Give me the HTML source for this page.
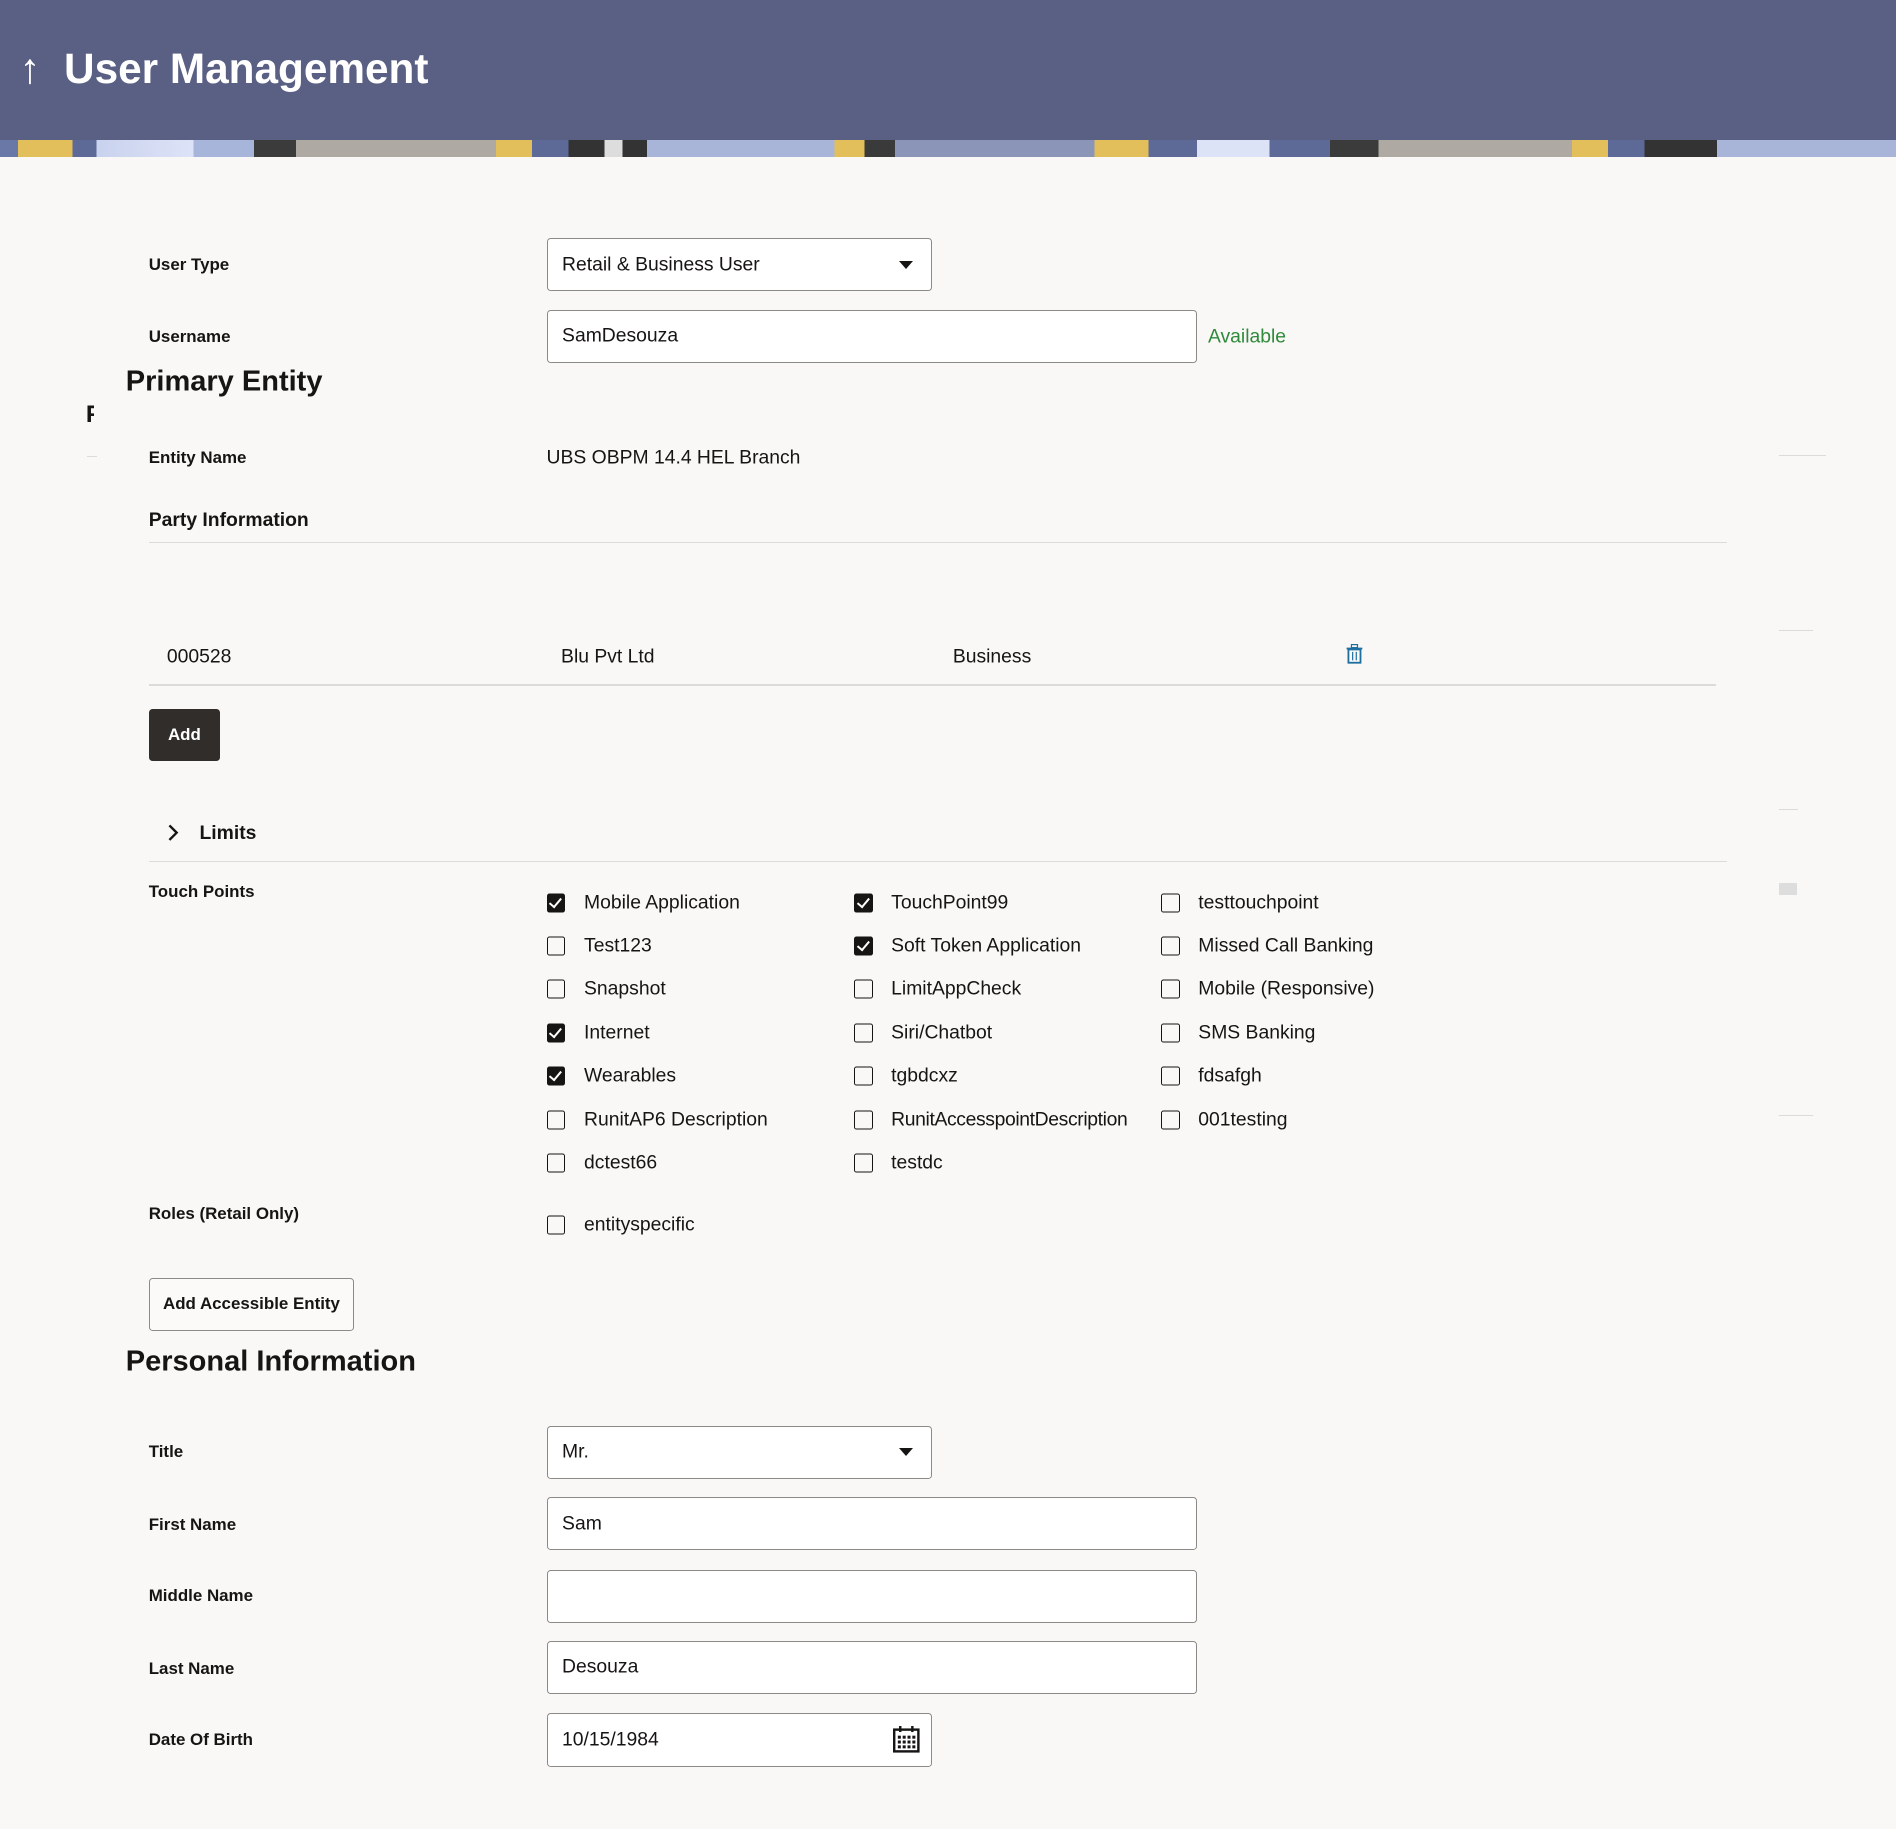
<!DOCTYPE html>
<html><head><meta charset="utf-8">
<style>
html,body{margin:0;padding:0;background:#f9f8f6;}
body{width:1896px;height:1829px;overflow:hidden;}
#w{zoom:1.20918;width:1568px;height:1513px;position:relative;font-family:"Liberation Sans",sans-serif;color:#161513;background:#f9f8f6;}
.a{position:absolute;}
.hdr{left:0;top:0;width:1568px;height:116px;background:#5a6084;}
.strip{left:0;top:116px;width:1568px;height:14px;
background:linear-gradient(90deg,#6a78a8 0,#6a78a8 15px,#e3bf5c 15px,#e3bf5c 60px,#5d6a98 60px,#5d6a98 80px,#c9d2ee 80px,#dde3f7 160px,#a8b5da 160px,#a8b5da 210px,#3b3b3b 210px,#3b3b3b 245px,#aeaaa3 245px,#aeaaa3 410px,#e3bf5c 410px,#e3bf5c 440px,#5d6a98 440px,#5d6a98 470px,#333 470px,#333 500px,#ddd 500px,#ddd 515px,#333 515px,#333 535px,#a9b5d8 535px,#a9b5d8 690px,#e3bf5c 690px,#e3bf5c 715px,#3a3a3a 715px,#3a3a3a 740px,#8b95b8 740px,#8b95b8 905px,#e3bf5c 905px,#e3bf5c 950px,#5d6a98 950px,#5d6a98 990px,#dde3f7 990px,#dde3f7 1050px,#5d6a98 1050px,#5d6a98 1100px,#3b3b3b 1100px,#3b3b3b 1140px,#aeaaa3 1140px,#aeaaa3 1300px,#e3bf5c 1300px,#e3bf5c 1330px,#5d6a98 1330px,#5d6a98 1360px,#333 1360px,#333 1420px,#a9b5d8 1420px,#a9b5d8 1568px);}
.title{left:16px;top:37px;color:#fff;font-size:35px;font-weight:bold;white-space:nowrap;}
.lbl{left:123px;font-size:14px;font-weight:bold;color:#161513;transform:translateY(-50%);}
.val{font-size:16px;transform:translateY(-50%);white-space:nowrap;}
.box{border:1px solid #8c8a87;border-radius:3px;background:#fff;box-sizing:border-box;}
.box span{position:absolute;left:12px;top:50%;transform:translateY(-50%);font-size:16px;}
.caret{position:absolute;right:15px;top:18px;width:0;height:0;border-left:6px solid transparent;border-right:6px solid transparent;border-top:7px solid #161513;}
.h2{left:104px;font-size:24px;font-weight:bold;transform:translateY(-50%);}
.line{height:1px;background:#dcdbd8;}
.cb{width:14px;height:14px;border:1.5px solid #161513;border-radius:2px;box-sizing:content-box;transform:translateY(-50%);}
.cb.on{background:#161513;}
.cb.on::after{content:"";position:absolute;left:4px;top:1px;width:4px;height:8px;border:solid #fff;border-width:0 2px 2px 0;transform:rotate(40deg);}
.ct{font-size:16px;transform:translateY(-50%);white-space:nowrap;}
</style></head><body><div id="w">
<div class="a hdr"></div>
<div class="a strip"></div>
<div class="a title">↑&nbsp;&nbsp;User Management</div>

<div class="a lbl" style="top:219px">User Type</div>
<div class="a box" style="left:452px;top:197px;width:319px;height:44px"><span>Retail &amp; Business User</span><div class="caret"></div></div>
<div class="a lbl" style="top:279px">Username</div>
<div class="a box" style="left:452px;top:256px;width:538px;height:44px"><span>SamDesouza</span></div>
<div class="a val" style="left:999px;top:279px;color:#2f8a3b">Available</div>

<div class="a h2" style="top:316px">Primary Entity</div>
<div class="a" style="left:71px;top:333px;width:7px;height:20px;overflow:hidden;font-size:20px;font-weight:bold;line-height:20px">F</div>
<div class="a line" style="left:72px;top:377px;width:8px"></div>
<div class="a line" style="left:1471px;top:376px;width:39px"></div>
<div class="a line" style="left:1471px;top:521px;width:28px"></div>
<div class="a line" style="left:1471px;top:669px;width:16px"></div>
<div class="a" style="left:1471px;top:730px;width:15px;height:10px;background:#ddd"></div>
<div class="a line" style="left:1471px;top:922px;width:28px"></div>

<div class="a lbl" style="top:379px">Entity Name</div>
<div class="a val" style="left:452px;top:379px">UBS OBPM 14.4 HEL Branch</div>
<div class="a" style="left:123px;top:421px;font-size:16px;font-weight:bold">Party Information</div>
<div class="a line" style="left:123px;top:448px;width:1305px"></div>
<div class="a val" style="left:138px;top:543px">000528</div>
<div class="a val" style="left:464px;top:543px">Blu Pvt Ltd</div>
<div class="a val" style="left:788px;top:543px">Business</div>
<svg class="a" style="left:1113px;top:533px" width="14" height="16" viewBox="0 0 14 16"><rect x="4.5" y="0.5" width="5" height="2.5" fill="none" stroke="#1d6fa0"/><rect x="0.5" y="3" width="13" height="1.5" fill="#1d6fa0"/><rect x="2" y="4.5" width="10" height="11" fill="none" stroke="#1d6fa0" stroke-width="1.5"/><line x1="5.5" y1="6.5" x2="5.5" y2="13.5" stroke="#1d6fa0"/><line x1="8.5" y1="6.5" x2="8.5" y2="13.5" stroke="#1d6fa0"/></svg>
<div class="a line" style="left:123px;top:566px;width:1296px"></div>
<div class="a" style="left:123px;top:586px;width:59px;height:43px;background:#312d2a;border-radius:3px;color:#fff;font-size:14px;font-weight:bold;line-height:43px;text-align:center">Add</div>

<svg class="a" style="left:138px;top:681px" width="10" height="16" viewBox="0 0 10 16"><path d="M2 2l6 6-6 6" fill="none" stroke="#161513" stroke-width="2"/></svg>
<div class="a" style="left:165px;top:680px;font-size:16px;font-weight:bold">Limits</div>
<div class="a line" style="left:123px;top:712px;width:1305px"></div>

<div class="a lbl" style="top:738px">Touch Points</div>

<div class="a cb on" style="left:452px;top:747px"></div><div class="a ct" style="left:483px;top:747px">Mobile Application</div>
<div class="a cb on" style="left:706px;top:747px"></div><div class="a ct" style="left:737px;top:747px">TouchPoint99</div>
<div class="a cb" style="left:960px;top:747px"></div><div class="a ct" style="left:991px;top:747px">testtouchpoint</div>

<div class="a cb" style="left:452px;top:782px"></div><div class="a ct" style="left:483px;top:782px">Test123</div>
<div class="a cb on" style="left:706px;top:782px"></div><div class="a ct" style="left:737px;top:782px">Soft Token Application</div>
<div class="a cb" style="left:960px;top:782px"></div><div class="a ct" style="left:991px;top:782px">Missed Call Banking</div>

<div class="a cb" style="left:452px;top:818px"></div><div class="a ct" style="left:483px;top:818px">Snapshot</div>
<div class="a cb" style="left:706px;top:818px"></div><div class="a ct" style="left:737px;top:818px">LimitAppCheck</div>
<div class="a cb" style="left:960px;top:818px"></div><div class="a ct" style="left:991px;top:818px">Mobile (Responsive)</div>

<div class="a cb on" style="left:452px;top:854px"></div><div class="a ct" style="left:483px;top:854px">Internet</div>
<div class="a cb" style="left:706px;top:854px"></div><div class="a ct" style="left:737px;top:854px">Siri/Chatbot</div>
<div class="a cb" style="left:960px;top:854px"></div><div class="a ct" style="left:991px;top:854px">SMS Banking</div>

<div class="a cb on" style="left:452px;top:890px"></div><div class="a ct" style="left:483px;top:890px">Wearables</div>
<div class="a cb" style="left:706px;top:890px"></div><div class="a ct" style="left:737px;top:890px">tgbdcxz</div>
<div class="a cb" style="left:960px;top:890px"></div><div class="a ct" style="left:991px;top:890px">fdsafgh</div>

<div class="a cb" style="left:452px;top:926px"></div><div class="a ct" style="left:483px;top:926px">RunitAP6 Description</div>
<div class="a cb" style="left:706px;top:926px"></div><div class="a ct" style="left:737px;top:926px;letter-spacing:-0.3px">RunitAccesspointDescription</div>
<div class="a cb" style="left:960px;top:926px"></div><div class="a ct" style="left:991px;top:926px">001testing</div>

<div class="a cb" style="left:452px;top:962px"></div><div class="a ct" style="left:483px;top:962px">dctest66</div>
<div class="a cb" style="left:706px;top:962px"></div><div class="a ct" style="left:737px;top:962px">testdc</div>

<div class="a lbl" style="top:1004px">Roles (Retail Only)</div>
<div class="a cb" style="left:452px;top:1013px"></div><div class="a ct" style="left:483px;top:1013px">entityspecific</div>

<div class="a" style="left:123px;top:1057px;width:170px;height:44px;border:1px solid #8c8a87;border-radius:3px;box-sizing:border-box;font-size:14px;font-weight:bold;line-height:42px;text-align:center;background:#fbfaf8">Add Accessible Entity</div>

<div class="a h2" style="top:1126px">Personal Information</div>

<div class="a lbl" style="top:1201px">Title</div>
<div class="a box" style="left:452px;top:1179px;width:319px;height:44px"><span>Mr.</span><div class="caret"></div></div>
<div class="a lbl" style="top:1261px">First Name</div>
<div class="a box" style="left:452px;top:1238px;width:538px;height:44px"><span>Sam</span></div>
<div class="a lbl" style="top:1320px">Middle Name</div>
<div class="a box" style="left:452px;top:1298px;width:538px;height:44px"></div>
<div class="a lbl" style="top:1380px">Last Name</div>
<div class="a box" style="left:452px;top:1357px;width:538px;height:44px"><span>Desouza</span></div>
<div class="a lbl" style="top:1439px">Date Of Birth</div>
<div class="a box" style="left:452px;top:1417px;width:319px;height:44px"><span>10/15/1984</span>
<svg style="position:absolute;left:286px;top:10px" width="22" height="22" viewBox="0 0 22 22"><rect x="1" y="3" width="20" height="18" fill="none" stroke="#161513" stroke-width="2"/><line x1="6" y1="0" x2="6" y2="5" stroke="#161513" stroke-width="2"/><line x1="16" y1="0" x2="16" y2="5" stroke="#161513" stroke-width="2"/><g fill="#161513"><rect x="4" y="8" width="2.5" height="2.5"/><rect x="8" y="8" width="2.5" height="2.5"/><rect x="12" y="8" width="2.5" height="2.5"/><rect x="16" y="8" width="2.5" height="2.5"/><rect x="4" y="12" width="2.5" height="2.5"/><rect x="8" y="12" width="2.5" height="2.5"/><rect x="12" y="12" width="2.5" height="2.5"/><rect x="16" y="12" width="2.5" height="2.5"/><rect x="4" y="16" width="2.5" height="2.5"/><rect x="8" y="16" width="2.5" height="2.5"/><rect x="12" y="16" width="2.5" height="2.5"/><rect x="16" y="16" width="2.5" height="2.5"/></g></svg></div>
</div></body></html>
